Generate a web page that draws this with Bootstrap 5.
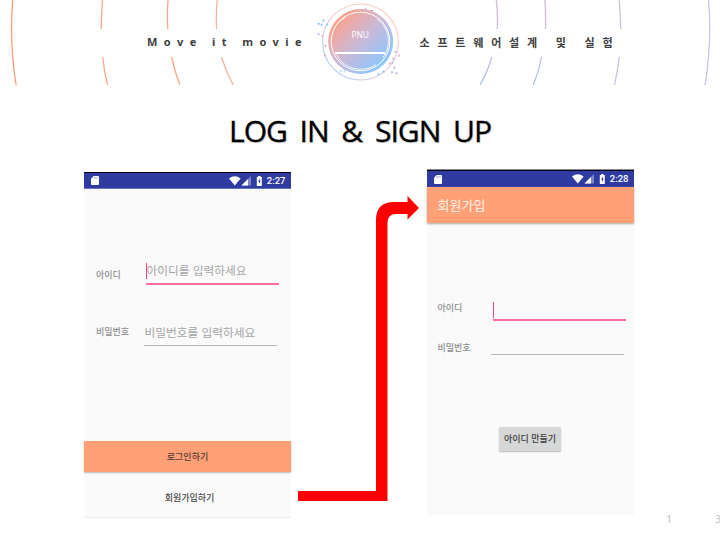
<!DOCTYPE html>
<html lang="ko">
<head>
<meta charset="utf-8">
<meta name="viewport" content="width=device-width, initial-scale=1">
<title>LOG IN &amp; SIGN UP</title>
<link href="https://cdn.jsdelivr.net/npm/bootstrap@5.3.0/dist/css/bootstrap.min.css" rel="stylesheet">
<style>
body{font-family:"Noto Sans","Noto Sans CJK KR",sans-serif;background:#fff;color:#404040}
.slide{width:720px;height:540px}
.slide-head{height:85px}
.head-text{font-size:11px;font-weight:700;line-height:16px;white-space:pre;padding-top:34px}
.head-en{margin-left:147px;width:175px;letter-spacing:6.45px}
.head-ko{margin-left:97.5px;letter-spacing:7.8px;font-family:"Noto Sans CJK KR",sans-serif}
.slide-title{height:84px;padding-top:26px;font-family:"Open Sans",sans-serif;font-size:30px;line-height:40px;font-weight:400;color:#000;text-shadow:1px 1px 1px #ccc;letter-spacing:-1px;word-spacing:6px;-webkit-text-stroke:.3px #000}
.phone{width:207px;background:#fafafa;font-family:"Noto Sans CJK KR",sans-serif;font-size:9px;line-height:14px;color:#858585}
.phone-login{margin:3px 0 0 84px;height:346px;border-bottom:1px solid #efefef}
.phone-join{margin:0 0 0 8px;height:346px;border-top:1px solid #888}
.statusbar{height:17px;background:#303ba2;border-top:1.5px solid #050518;border-bottom:1px solid #6871bb;color:#fff;font:500 9.5px/14px Roboto,sans-serif;padding:0 5.5px 0 7px}
.phone-join .statusbar{border-bottom:0}
.statusbar .signals{margin-right:2px}
.form-line{padding-left:12px}
.form-label-kr{font-weight:500;color:#8d8d8d}
.entry{width:133px;font-size:11.7px;line-height:18px;color:#a5a5a5;white-space:nowrap}
.entry-on{border-bottom:2px solid #ff6c9b}
.entry-off{border-bottom:1.3px solid #b5b5b5}
.caret{width:1.4px;height:16px;background:#ff4081}
.btn-coral{height:31px;background:#ffa077;color:#593b30;font-size:9px;font-weight:500;box-shadow:0 1px 1.5px #bbb}
.link-join{height:45px;color:#484848;font-weight:500;padding-top:6px}
.appbar{height:36px;background:#ffa077;color:#fff0e8;font-size:13px;padding-left:10.5px;box-shadow:0 1px 2px #aaa}
.btn-make{width:62px;height:24px;background:#d6d7d7;color:#3b3b3b;font-size:9px;line-height:14px;font-weight:500;border-radius:1.5px;box-shadow:0 1px 1.5px #bbb}
.arrow-col{width:121px;margin:27px 0 0 7px}
.page-no{margin-top:-6px;margin-right:-1px;font-size:10.5px;line-height:14px;color:#bdbdbd;gap:43px}
</style>
<script src="https://cdn.jsdelivr.net/npm/bootstrap@5.3.0/dist/js/bootstrap.bundle.min.js"></script>
</head>
<body>
<svg width="0" height="0" class="position-absolute" aria-hidden="true">
<symbol id="sd" viewBox="0 0 9 10"><path fill="#fff" d="M3 0h5q1 0 1 1v8q0 1-1 1H1Q0 10 0 9V3Z"/><path stroke="#8790cc" stroke-width=".8" d="M3.6 1v2M5.3 1v2M7 1v2"/></symbol>
<symbol id="signals" viewBox="0 0 36 12"><path fill="#fff" d="M0 3.400Q5.800-.8 11.600 3.400L5.800 10.400Z"/><path fill="#7b84c6" d="M22 1v9.500h-9.500Z"/><path fill="#fff" d="M19 4v6.500h-6.500Z"/><path fill="#fff" d="M27.800 2h1.300V1h2.400v1h1.300v9h-5Z"/><path fill="#303ba2" d="m30.800 3.500-1.700 3h1v2.500l1.600-3.200h-.9Z"/></symbol>
</svg>
<div class="slide position-relative overflow-hidden">
<header class="slide-head d-flex position-relative">
<svg class="position-absolute top-0 start-0" width="720" height="85" viewBox="0 0 720 85" fill="none">
<defs>
<linearGradient id="ball" x1=".12" y1=".12" x2=".85" y2=".85"><stop stop-color="#ff9f85"/><stop offset=".5" stop-color="#ccb9d6"/><stop offset="1" stop-color="#8ac6ff"/></linearGradient>
<linearGradient id="halo" x1="1" y1="0" x2="0" y2="1"><stop stop-color="#ffc5b5"/><stop offset=".4" stop-color="#f6cfce"/><stop offset="1" stop-color="#9fcdf8"/></linearGradient>
<linearGradient id="cool" gradientUnits="userSpaceOnUse" x1="0" y1="0" x2="0" y2="85"><stop stop-color="#d4b8d8"/><stop offset=".5" stop-color="#c9bfe0"/><stop offset="1" stop-color="#adc3ed"/></linearGradient>
</defs>
<g stroke="#fca888" stroke-width="1.3">
<path d="M12.700 0A349 349 0 0 0 16.100 85" stroke="#fb9c75"/>
<path d="M102.600 0Q101.400 14 101.200 29M102.800 57Q104 71 107.500 85"/>
<path d="M168 0Q167 14 167.800 29M171.500 57Q174.500 71 180 85"/>
<path d="M217.200 0Q215.900 14 216.500 29M221.500 57Q225.500 71 233.200 85" stroke="#f9b2a0"/>
</g>
<g stroke="url(#cool)" stroke-width="1.300">
<path d="M496.300 0Q498 14 497.300 29M491.800 57Q488 71 480 85"/>
<path d="M544.900 0Q546 14 545.400 29M541.600 57Q539 71 533.200 85"/>
<path d="M619.200 0Q620.500 14 620.700 29M619.200 57Q617.800 71 614.500 85" stroke="#cdbfe0"/>
<path d="M708.600 0A349 349 0 0 1 705 85" stroke="#cbc3e1"/>
</g>
<circle cx="360.500" cy="42" r="38" stroke="url(#halo)" stroke-width="1.100"/>
<circle cx="360.700" cy="41.500" r="32.500" fill="url(#ball)"/>
<g stroke="#fff"><circle cx="360.500" cy="41.500" r="29.300" stroke-width="1"/><path d="M337.500 23.500Q341 19.500 345 17.500M377 18.800A27.500 27.500 0 0 1 383 57.500M376 64.500A27.500 27.500 0 0 1 336.500 55" stroke-width=".8"/><path d="M335 53H385" stroke-width="2"/></g>
<g fill="#8dc2f5"><path d="m323.500 19 1.500 2.500h-3zM317 23h3l-1.500 2.500zM321.500 23l1.500 2.500h-3zM327 23l1.500 2.500h-3zM377 73.500h3l-1.500 2.500zM383.500 70l1.500 2.500h-3z"/></g>
<g fill="#b8bbe2"><path d="m318.500 32.500 1.500 2.500h-3zM390.500 71.500h3l-1.500 2.500zM396.500 71.500l1.500 2.500h-3zM394 51h3l-1.500 2.500zM392 58h3l-1.500 2.500zM391 61.500h3l-1.500 2.500zM394.500 66l1.500 2.500h-3z"/></g>
<g fill="#dfb5cd"><path d="M321 35h3l-1.500 2.500zM324 45h3l-1.500 2.500zM325 53.500l1.500 2.500h-3zM365.500 7.500l1.500 2.500h-3zM370 10h3v1h-3zM399 54l1.500 2.500h-3zM390 62l1.500 2.500h-3z"/></g>
<path fill="#bfe0ff" d="m341 69 1.700 2.800h-3.400zM342.800 70h3.400l-1.700 2.800z"/>
<text x="360.200" y="38.200" fill="#fff" font-family="Open Sans,sans-serif" font-size="9.800" text-anchor="middle" textLength="17.500" lengthAdjust="spacingAndGlyphs">PNU</text>
</svg>
<div class="head-text head-en position-relative">Move it movie</div>
<div class="head-text head-ko position-relative">소프트웨어설계 및 실험</div>
</header>
<h1 class="slide-title text-center mb-0">LOG IN &amp; SIGN UP</h1>
<main class="d-flex align-items-start">
<section class="phone phone-login d-flex flex-column">
<div class="statusbar d-flex align-items-center flex-shrink-0"><svg width="8" height="9"><use href="#sd"/></svg><svg class="signals ms-auto" width="36" height="12"><use href="#signals"/></svg>2:27</div>
<div class="form-line d-flex" style="margin-top:72px"><span class="form-label-kr" style="width:50px;padding-top:7px">아이디</span><div class="entry entry-on d-flex" style="height:24px"><i class="caret" style="margin-top:2px;margin-right:-1px"></i><span>아이디를 입력하세요</span></div></div>
<div class="form-line d-flex" style="margin-top:37px"><span class="form-label-kr" style="width:48px;padding-top:3px">비밀번호</span><div class="entry entry-off" style="height:24px;padding:1px 0 0 .5px">비밀번호를 입력하세요</div></div>
<div class="btn-coral mt-auto d-flex align-items-center justify-content-center flex-shrink-0">로그인하기</div>
<div class="link-join d-flex align-items-center justify-content-center flex-shrink-0"><span class="ps-1">회원가입하기</span></div>
</section>
<div class="arrow-col">
<svg class="d-block" width="121" height="306" viewBox="298 196 121 306"><path fill="red" d="M298 491H376V220Q376 202 394 202H407.500V196L419 208 407.500 219.500V214H396Q387.500 214 387.500 223V501H298Z"/></svg>
</div>
<section class="phone phone-join">
<div class="statusbar d-flex align-items-center"><svg width="8" height="9"><use href="#sd"/></svg><svg class="signals ms-auto" width="36" height="12"><use href="#signals"/></svg>2:28</div>
<div class="appbar d-flex align-items-center">회원가입</div>
<div class="d-flex" style="padding-left:10.5px;margin-top:77px"><span class="form-label-kr" style="width:55px;padding-top:1px">아이디</span><div class="entry entry-on" style="height:21px"><i class="caret d-block" style="margin-top:2px"></i></div></div>
<div class="d-flex" style="padding-left:10.5px;margin-top:18px"><span class="form-label-kr" style="width:53.5px;padding-top:2px">비밀번호</span><div class="entry entry-off" style="height:16px"></div></div>
<div class="btn-make d-flex align-items-center justify-content-center" style="margin:72px 0 0 72px">아이디 만들기</div>
</section>
</main>
<footer class="page-no d-flex justify-content-end"><span>1</span><span>3</span></footer>
</div>
</body>
</html>
